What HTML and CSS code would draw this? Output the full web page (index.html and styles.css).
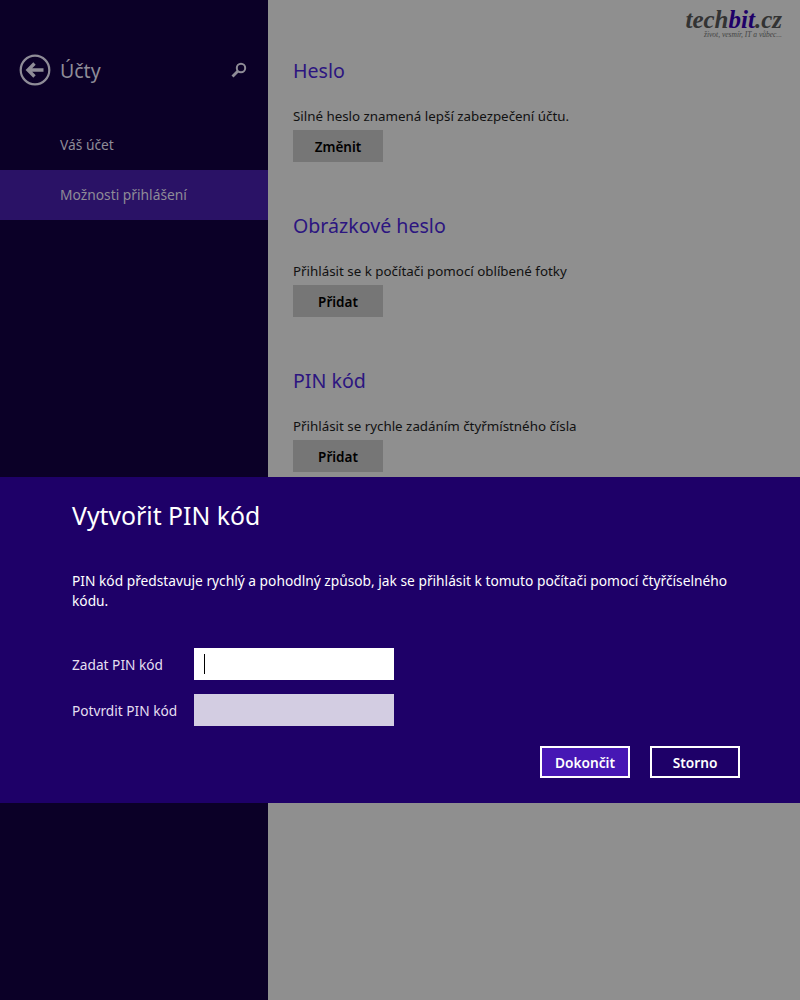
FILE: index.html
```html
<!DOCTYPE html>
<html lang="cs">
<head>
  <meta charset="UTF-8" />
  <title>Účty</title>
  <link rel="stylesheet" href="styles.css">
</head>
<body>
  <div class="page">
    <aside class="sidebar">
      <div class="side-head">
        <svg class="back" width="32" height="32" viewBox="0 0 32 32">
          <circle cx="16" cy="16" r="14.3" fill="none" stroke="#8f8c97" stroke-width="2.2"/>
          <path d="M9 16H24.5M15.5 9.5L9 16L15.5 22.5" fill="none" stroke="#8f8c97" stroke-width="3.4"/>
        </svg>
        <span class="side-title">Účty</span>
        <svg class="search" width="16" height="16" viewBox="0 0 16 16">
          <circle cx="10" cy="6" r="4.2" fill="none" stroke="#8f8c97" stroke-width="2"/>
          <path d="M7 9L1.5 14.5" fill="none" stroke="#8f8c97" stroke-width="2.8"/>
        </svg>
      </div>
      <nav class="side-nav">
        <div class="side-item">Váš účet</div>
        <div class="side-item selected">Možnosti přihlášení</div>
      </nav>
    </aside>

    <main class="content">
      <section class="group">
        <h2>Heslo</h2>
        <p>Silné heslo znamená lepší zabezpečení účtu.</p>
        <div class="gray-btn">Změnit</div>
      </section>
      <section class="group">
        <h2>Obrázkové heslo</h2>
        <p>Přihlásit se k počítači pomocí oblíbené fotky</p>
        <div class="gray-btn">Přidat</div>
      </section>
      <section class="group">
        <h2>PIN kód</h2>
        <p>Přihlásit se rychle zadáním čtyřmístného čísla</p>
        <div class="gray-btn">Přidat</div>
      </section>
    </main>
  </div>

  <div class="logo">
    <div class="logo-name">tech<span class="logo-bit">bit</span>.cz</div>
    <div class="logo-sub">život, vesmír, IT a vůbec...</div>
  </div>

  <div class="dialog">
    <h1>Vytvořit PIN kód</h1>
    <p class="dialog-text">PIN kód představuje rychlý a pohodlný způsob, jak se přihlásit k tomuto počítači pomocí čtyřčíselného kódu.</p>
    <div class="form-row">
      <label>Zadat PIN kód</label>
      <div class="field active"><span class="caret"></span></div>
    </div>
    <div class="form-row">
      <label>Potvrdit PIN kód</label>
      <div class="field disabled"></div>
    </div>
    <div class="dialog-actions">
      <div class="dlg-btn primary">Dokončit</div>
      <div class="dlg-btn">Storno</div>
    </div>
  </div>
</body>
</html>
```

FILE: styles.css
```css
html, body {
  margin: 0;
  height: 1000px;
  overflow: hidden;
}

body {
  font-family: 'Noto Sans', 'Open Sans', sans-serif;
  background: #8f8f8f;
  position: relative;
}

.page {
  display: flex;
  height: 1000px;
}

.sidebar {
  width: 268px;
  background: #0b0027;
  color: #8f8c97;
}

.side-head {
  display: flex;
  align-items: center;
  height: 32px;
  padding: 54px 21px 0 19px;
}

.side-title {
  font-size: 19.5px;
  margin-left: 9px;
  flex: 1;
}

.side-nav {
  margin-top: 34px;
}

.side-item {
  height: 50px;
  line-height: 50px;
  padding-left: 60px;
  font-size: 13.8px;
}

.side-item.selected {
  background: #2a1266;
}

.content {
  flex: 1;
  padding: 57px 0 0 25px;
  color: #000;
}

.group {
  height: 155px;
}

h2 {
  margin: 0;
  font-size: 19.6px;
  font-weight: 400;
  line-height: 28px;
  color: #2c1580;
}

.group p {
  margin: 20px 0 0;
  font-size: 13.35px;
  line-height: 22px;
  color: #111;
}

.gray-btn {
  width: 90px;
  height: 32px;
  margin-top: 3px;
  line-height: 34px;
  text-align: center;
  background: #767676;
  font-size: 13.5px;
  font-weight: 600;
  color: #000;
}

.logo {
  position: absolute;
  top: 8px;
  right: 18px;
  text-align: right;
}

.logo-name {
  font-family: 'Liberation Serif', serif;
  font-style: italic;
  font-weight: 700;
  font-size: 25px;
  line-height: 23px;
  color: #333;
}

.logo-bit {
  color: #1e0068;
}

.logo-sub {
  font-family: 'Liberation Serif', serif;
  font-style: italic;
  font-size: 7.5px;
  line-height: 7px;
  color: #444;
}

.dialog {
  position: absolute;
  left: 0;
  right: 0;
  top: 477px;
  height: 326px;
  box-sizing: border-box;
  padding: 20px 60px 0 72px;
  background: #1e0068;
  color: #fff;
}

h1 {
  margin: 0;
  font-size: 24.8px;
  font-weight: 400;
  line-height: 36px;
}

.dialog-text {
  margin: 38px 0 0;
  font-size: 13.75px;
  line-height: 20px;
}

.form-row {
  display: flex;
  align-items: center;
  height: 32px;
  margin-bottom: 14px;
  font-size: 13.7px;
  color: #e4dff0;
}

.form-row:first-of-type {
  margin-top: 37px;
}

.form-row label {
  width: 122px;
}

.field {
  width: 200px;
  height: 32px;
  display: flex;
  align-items: center;
}

.field.active {
  background: #fff;
}

.field.disabled {
  background: #d3cde2;
}

.caret {
  width: 1px;
  height: 20px;
  margin-left: 10px;
  background: #000;
}

.dialog-actions {
  display: flex;
  justify-content: flex-end;
  gap: 20px;
  margin-top: 20px;
}

.dlg-btn {
  width: 90px;
  height: 32px;
  box-sizing: border-box;
  border: 2px solid #fff;
  line-height: 29px;
  text-align: center;
  font-size: 13.7px;
  font-weight: 600;
}

.dlg-btn.primary {
  background: #4617b4;
}
```
